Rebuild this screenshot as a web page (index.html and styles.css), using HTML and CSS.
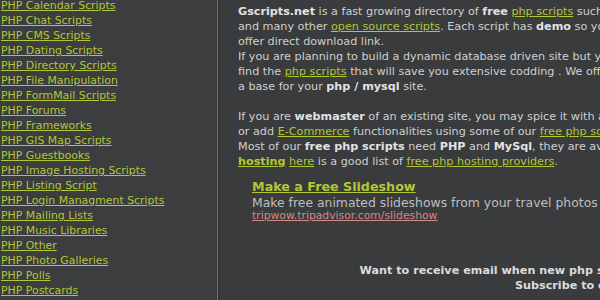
FILE: index.html
```html
<!DOCTYPE html>
<html>
<head>
<meta charset="utf-8">
<link rel="stylesheet" href="styles.css">
</head>
<body>
<div class="page">
  <nav class="side">
    <ul class="cats">
      <li><a href="#">PHP Calendar Scripts</a></li>
      <li><a href="#">PHP Chat Scripts</a></li>
      <li><a href="#">PHP CMS Scripts</a></li>
      <li><a href="#">PHP Dating Scripts</a></li>
      <li><a href="#">PHP Directory Scripts</a></li>
      <li><a href="#">PHP File Manipulation</a></li>
      <li><a href="#">PHP FormMail Scripts</a></li>
      <li><a href="#">PHP Forums</a></li>
      <li><a href="#">PHP Frameworks</a></li>
      <li><a href="#">PHP GIS Map Scripts</a></li>
      <li><a href="#">PHP Guestbooks</a></li>
      <li><a href="#">PHP Image Hosting Scripts</a></li>
      <li><a href="#">PHP Listing Script</a></li>
      <li><a href="#">PHP Login Managment Scripts</a></li>
      <li><a href="#">PHP Mailing Lists</a></li>
      <li><a href="#">PHP Music Libraries</a></li>
      <li><a href="#">PHP Other</a></li>
      <li><a href="#">PHP Photo Galleries</a></li>
      <li><a href="#">PHP Polls</a></li>
      <li><a href="#">PHP Postcards</a></li>
    </ul>
  </nav>
  <main class="main">
    <p class="text intro">
      <span class="line"><b>Gscripts.net</b> is a fast growing directory of <b>free</b> <a href="#">php scripts</a> such as content management systems, forums, blogs</span>
      <span class="line">and many other <a href="#">open source scripts</a>. Each script has <b>demo</b> so you can try it before downloading and we</span>
      <span class="line">offer direct download link.</span>
      <span class="line">If you are planning to build a dynamic database driven site but you don't want to start from scratch, here you will</span>
      <span class="line">find the <a href="#">php scripts</a> that will save you extensive codding . We offer hundreds of scripts you can use as</span>
      <span class="line">a base for your <b>php / mysql</b> site.</span>
    </p>
    <p class="text tail">
      <span class="line">If you are <b>webmaster</b> of an existing site, you may spice it with a forum, a blog, a guestbook, a photo gallery</span>
      <span class="line">or add <a href="#">E-Commerce</a> functionalities using some of our <a href="#">free php scripts</a> available in our directory.</span>
      <span class="line">Most of our <b>free php scripts</b> need <b>PHP</b> and <b>MySql</b>, they are available at most web hosts. If you need</span>
      <span class="line"><a href="#"><b>hosting</b></a> <a href="#">here</a> is a good list of <a href="#">free php hosting providers</a>.</span>
    </p>
    <div class="ad">
      <a class="ad-title" href="#">Make a Free Slideshow</a>
      <div class="ad-desc">Make free animated slideshows from your travel photos</div>
      <a class="ad-url" href="#">tripwow.tripadvisor.com/slideshow</a>
    </div>
    <div class="subscribe">
      <div>Want to receive email when new php scripts are added to our free directory?</div>
      <div>Subscribe to our newsletter</div>
    </div>
  </main>
</div>
</body>
</html>
```

FILE: styles.css
```css
html, body {
  margin: 0;
  padding: 0;
  overflow: hidden;
  background: #393b3c;
}
body {
  font-family: "DejaVu Sans", Verdana, sans-serif;
  font-size: 11.2px;
  line-height: 15px;
  color: #cfd0d0;
}
.page {
  display: flex;
  width: 1000px;
  height: 300px;
}
.side {
  width: 217px;
  flex: none;
  background: #3b3d3e;
  border-right: 1px solid #6f7171;
  box-shadow: 1px 0 0 #303233;
  font-size: 10.9px;
}
.cats {
  list-style: none;
  margin: -2px 0 0 0;
  padding: 0 0 0 1px;
}
.cats li {
  height: 15px;
  white-space: nowrap;
}
a {
  color: #b3c736;
  text-decoration: underline;
}
.main {
  flex: 1;
  padding: 4px 0 0 20px;
  overflow: hidden;
}
.text {
  margin: 0;
}
.intro {
  margin-bottom: 15px;
}
.tail {
  margin-bottom: 10px;
}
.line {
  display: block;
  white-space: nowrap;
}
b {
  color: #e2e2e2;
}
.text a b {
  color: #b3c736;
}
.ad {
  padding-left: 14px;
}
.ad-title {
  display: block;
  font-weight: bold;
  font-size: 12.7px;
  line-height: 16px;
}
.ad-desc {
  font-size: 12.4px;
  line-height: 15px;
  color: #bdbebe;
  white-space: nowrap;
}
.ad-url {
  display: block;
  color: #d48a86;
  font-size: 10.8px;
  line-height: 11px;
}
.subscribe {
  width: 730px;
  margin-top: 42px;
  text-align: center;
  font-weight: bold;
  color: #dcdcdc;
  white-space: nowrap;
}
```
